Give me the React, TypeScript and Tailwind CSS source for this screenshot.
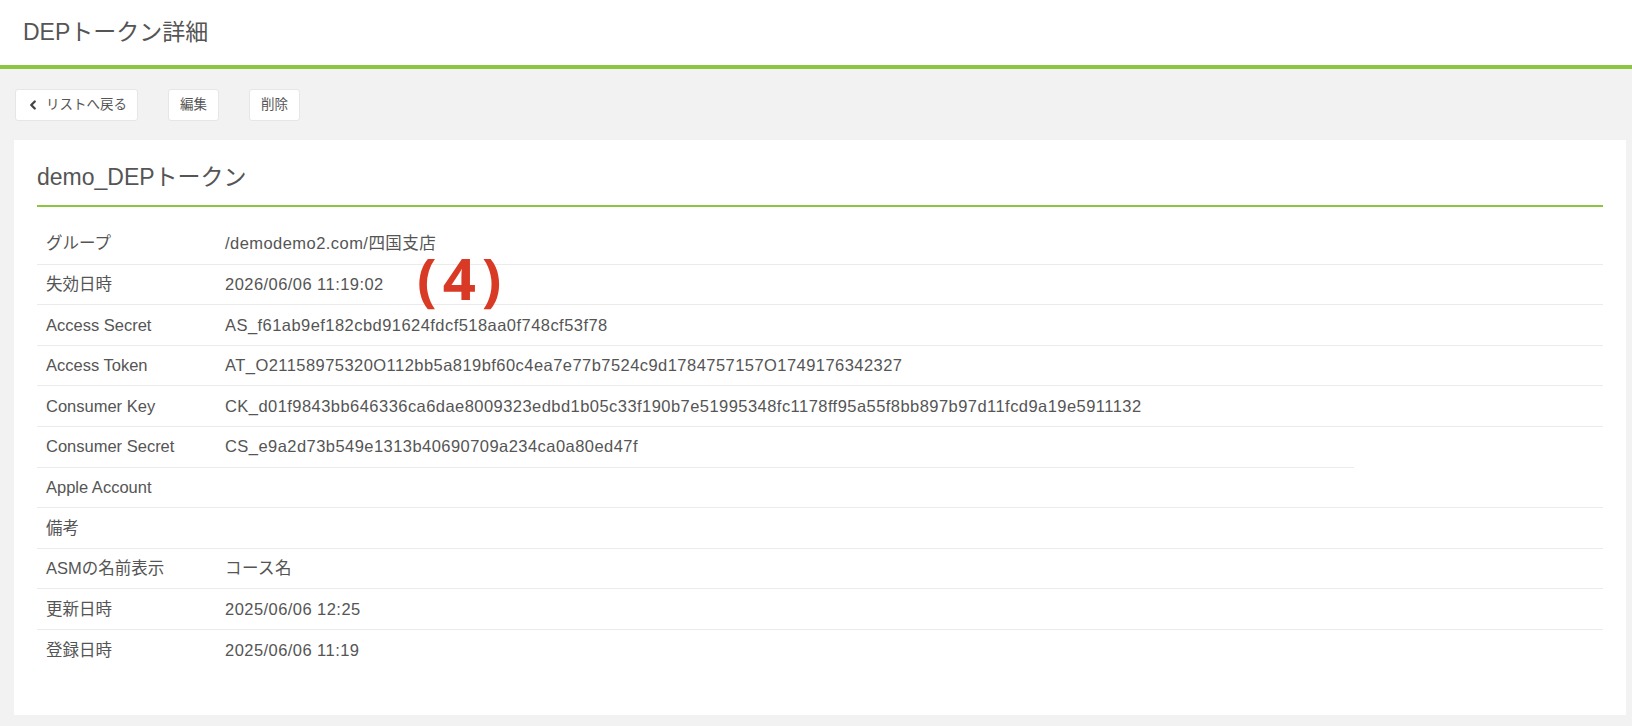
import React from 'react';
import { ChevronLeft } from 'lucide-react';

interface Row {
  label: string;
  value: string;
  shortBorder?: boolean;
}

const rows: Row[] = [
  { label: 'グループ', value: '/demodemo2.com/四国支店' },
  { label: '失効日時', value: '2026/06/06 11:19:02' },
  { label: 'Access Secret', value: 'AS_f61ab9ef182cbd91624fdcf518aa0f748cf53f78' },
  { label: 'Access Token', value: 'AT_O21158975320O112bb5a819bf60c4ea7e77b7524c9d1784757157O1749176342327' },
  {
    label: 'Consumer Key',
    value: 'CK_d01f9843bb646336ca6dae8009323edbd1b05c33f190b7e51995348fc1178ff95a55f8bb897b97d11fcd9a19e5911132',
  },
  { label: 'Consumer Secret', value: 'CS_e9a2d73b549e1313b40690709a234ca0a80ed47f', shortBorder: true },
  { label: 'Apple Account', value: '' },
  { label: '備考', value: '' },
  { label: 'ASMの名前表示', value: 'コース名' },
  { label: '更新日時', value: '2025/06/06 12:25' },
  { label: '登録日時', value: '2025/06/06 11:19' },
];

const font = "font-['Liberation_Sans','Noto_Sans_CJK_JP',sans-serif]";

const App: React.FC = () => {
  return (
    <div className={`min-h-[726px] bg-[#f2f2f2] text-[#555] ${font}`}>
      <header className="flex items-center h-[69px] bg-white border-b-4 border-[#8cc640] px-[23px] pb-[1px]">
        <h1 className="text-[23px] text-[#555] leading-none">DEPトークン詳細</h1>
      </header>

      <div className="flex gap-[30px] px-[15px] pt-[20px]">
        <button className="flex items-center h-[32px] pl-[10px] pr-[10px] bg-white border border-[#e6e6e6] rounded-[3px] text-[13.5px] text-[#555]">
          <ChevronLeft size={14} strokeWidth={4} className="mr-[6px] text-[#444]" />
          リストへ戻る
        </button>
        <button className="flex items-center justify-center h-[32px] w-[51px] bg-white border border-[#e6e6e6] rounded-[3px] text-[13.5px] text-[#555]">
          編集
        </button>
        <button className="flex items-center justify-center h-[32px] w-[51px] bg-white border border-[#e6e6e6] rounded-[3px] text-[13.5px] text-[#555]">
          削除
        </button>
      </div>

      <div className="relative ml-[14px] mr-[6px] mt-[19px] bg-white px-[23px] pb-[44px]">
        <div className="flex items-center h-[67px] pt-[10px] border-b-2 border-[#8cc640]">
          <h2 className="text-[23px] text-[#555] leading-none">demo_DEPトークン</h2>
        </div>

        <div className="mt-[17px] flex flex-col">
          {rows.map((row, i) => {
            const last = i === rows.length - 1;
            const border = last ? '' : 'border-b border-[#ebebeb]';
            return (
              <div key={row.label} className="flex h-[40.6px] text-[16.5px]">
                <div className={`flex items-center w-[178px] shrink-0 pl-[9px] ${border}`}>{row.label}</div>
                <div className={`flex ${row.shortBorder ? 'w-[1139px]' : 'flex-1'}`}>
                  <div className={`flex items-center flex-1 pl-[10px] tracking-[0.45px] ${border}`}>{row.value}</div>
                </div>
              </div>
            );
          })}
        </div>

        <div className="absolute left-[403px] top-[109px] text-[#d83a25] text-[58px] font-bold leading-none tracking-[6px] font-['Noto_Sans','Liberation_Sans',sans-serif]">
          (4)
        </div>
      </div>
    </div>
  );
};

export default App;
